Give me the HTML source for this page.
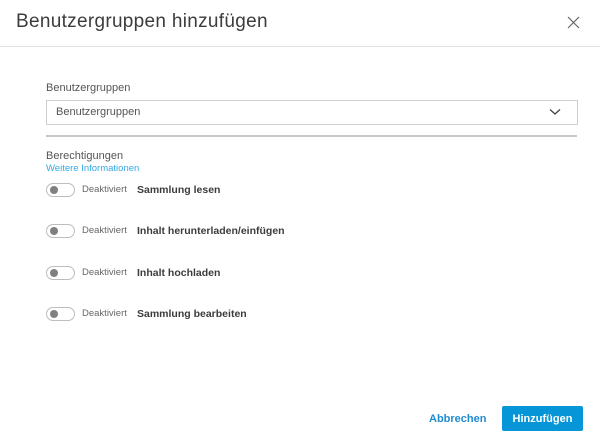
<!DOCTYPE html>
<html><head><style>
body{margin:0;width:600px;height:440px;background:#fff;font-family:"Liberation Sans",sans-serif;position:relative;overflow:hidden;color:#3c3c3c}
.a{position:absolute;white-space:nowrap}
.tog{position:absolute;left:46px;width:27px;height:12px;border:1px solid #bdbdbd;border-radius:7px;background:#fff}
.tog::after{content:"";position:absolute;left:3px;top:2px;width:8px;height:8px;border-radius:50%;background:#808080}
.d{font-size:9.5px;color:#666;left:82px}
.l{font-size:10.5px;font-weight:bold;color:#3c3c3c;left:137px}
</style></head><body>
<div class="a" style="left:16px;top:11px;font-size:19px;color:#3c3c3c;letter-spacing:0.3px">Benutzergruppen hinzufügen</div>
<svg class="a" style="left:567px;top:16px" width="13" height="13"><path d="M1 1L12 12M12 1L1 12" stroke="#666" stroke-width="1.2"/></svg>
<div class="a" style="left:0;top:46px;width:600px;height:1px;background:#e2e2e2"></div>
<div class="a" style="left:46px;top:82px;font-size:11px;color:#555">Benutzergruppen</div>
<div class="a" style="left:46px;top:100px;width:530px;height:23px;border:1px solid #cfcfcf"></div>
<div class="a" style="left:56px;top:106px;font-size:11px;color:#555">Benutzergruppen</div>
<svg class="a" style="left:549px;top:108px" width="12" height="8"><path d="M1 1.5L6 6L11 1.5" stroke="#444" stroke-width="1.3" fill="none"/></svg>
<div class="a" style="left:46px;top:135px;width:531px;height:2px;background:#c8c8c8"></div>
<div class="a" style="left:46px;top:150px;font-size:11px;color:#555">Berechtigungen</div>
<div class="a" style="left:46px;top:163px;font-size:9.5px;color:#36a9e1">Weitere Informationen</div>
<div class="tog" style="top:183px"></div><div class="a d" style="top:184px">Deaktiviert</div><div class="a l" style="top:184px">Sammlung lesen</div>
<div class="tog" style="top:224px"></div><div class="a d" style="top:225px">Deaktiviert</div><div class="a l" style="top:225px">Inhalt herunterladen/einfügen</div>
<div class="tog" style="top:266px"></div><div class="a d" style="top:267px">Deaktiviert</div><div class="a l" style="top:267px">Inhalt hochladen</div>
<div class="tog" style="top:307px"></div><div class="a d" style="top:308px">Deaktiviert</div><div class="a l" style="top:308px">Sammlung bearbeiten</div>
<div class="a" style="left:429px;top:413px;font-size:11px;font-weight:bold;color:#1f8ccf">Abbrechen</div>
<div class="a" style="left:502px;top:406px;width:81px;height:25px;background:#0696d7;border-radius:2px;color:#fff;font-size:11px;font-weight:bold;text-align:center;line-height:26px">Hinzufügen</div>
</body></html>
